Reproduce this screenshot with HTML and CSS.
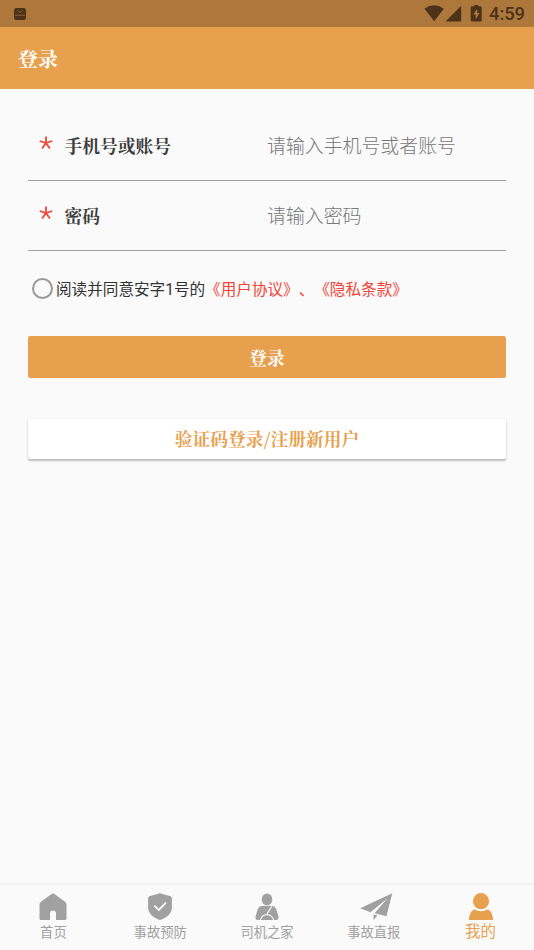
FILE: index.html
```html
<!DOCTYPE html>
<html lang="zh-CN">
<head>
<meta charset="utf-8">
<title>登录</title>
<link rel="stylesheet" href="styles.css">
</head>
<body>
<div class="status">
  <svg class="app-icon" width="12" height="12" viewBox="0 0 12 12"><rect width="12" height="12" rx="2.5" fill="#4b3218"/><path d="M3.2 2.2Q6 6 8.800 2.200M1 7.200h10" fill="none" stroke="#8e632f" stroke-width="1"/></svg>
  <svg class="indicators" width="60" height="18" viewBox="0 0 60 18"><g fill="#4b3218"><path d="M.5 3.700Q10 -3.200 19.800 3.700L10.200 16.200Z"/><path d="M37.200 .800V16.500H21.500Z"/><path d="M50.200 0h4v1.200h2.300q1.200 0 1.200 1.200V15.300q0 1.200-1.200 1.200h-8.600q-1.200 0-1.200-1.200V2.400q0-1.200 1.200-1.200h2.500Z"/></g><path d="M53.200 3.800l-4 5.800h2.400v4.700l4-6.400h-2.400Z" fill="#ae783c"/></svg>
  <span class="time">4:59</span>
</div>
<header class="header"><h1>登录</h1></header>
<main class="form">
  <div class="field">
    <svg class="star" width="14" height="14" viewBox="0 0 14 14"><path d="M7 .5V7L.7 5M7 7l6.300-2M7 7l-3.900 5.500M7 7l3.900 5.500"/></svg>
    <label>手机号或账号</label><span class="placeholder">请输入手机号或者账号</span>
  </div>
  <div class="field">
    <svg class="star" width="14" height="14" viewBox="0 0 14 14"><path d="M7 .5V7L.7 5M7 7l6.300-2M7 7l-3.900 5.500M7 7l3.900 5.500"/></svg>
    <label>密码</label><span class="placeholder">请输入密码</span>
  </div>
  <div class="agreement"><i class="radio"></i><span class="terms">阅读并同意安字1号的<span class="link">《用户协议》、《隐私条款》</span></span></div>
  <div class="button primary">登录</div>
  <div class="button secondary">验证码登录/注册新用户</div>
</main>
<nav class="tabs">
  <div class="tab"><svg width="36" height="30" viewBox="0 0 36 30"><path d="M16.200 2.200q1.800-1.300 3.600 0L30 9.700q1.500 1.200 1.500 3V26.500q0 1.500-1.500 1.500h-9v-6.500q0-3-3-3t-3 3V28H6q-1.500 0-1.500-1.500V12.700q0-1.800 1.500-3Z"/></svg><span>首页</span></div>
  <div class="tab"><svg width="36" height="30" viewBox="0 0 36 30"><path d="M18 1.300L28.500 4.300q1.400.400 1.400 2V16q0 7-10.200 11.600-1.700.800-3.400 0Q6.100 23 6.100 16V6.300q0-1.600 1.400-2Z"/><path d="M12.300 13.700l4.500 4.300 7.200-7.400" fill="none" stroke="#fafafa" stroke-width="1.800"/></svg><span>事故预防</span></div>
  <div class="tab"><svg width="36" height="30" viewBox="0 0 36 30"><ellipse cx="18" cy="7.500" rx="5.300" ry="6"/><path d="M12.500 14h11q2.500 0 4 4l2 6.500q.5 2.500-1.600 3.500h-2.600Q23.300 22 18 22T10.700 28H8.100Q6 27 6.500 24.500l2-6.500Q10 14 12.500 14Z"/><path d="M11.900 28q1.500-4.700 6.100-4.700T24.100 28Z"/><path d="M22.700 14.500l-4.700 7.500" fill="none" stroke="#fafafa" stroke-width="1.200"/></svg><span>司机之家</span></div>
  <div class="tab plane"><svg width="36" height="30" viewBox="0 0 36 30"><path d="M34.300 1.200L2.200 16.300l10.300 4L29.500 6.300 16.600 21.300l11.800 2.900ZM15.500 22.600l4 1-4 4.500Z"/></svg><span>事故直报</span></div>
  <div class="tab active"><svg width="36" height="30" viewBox="0 0 36 30"><circle cx="18" cy="9.200" r="8.100"/><path d="M11 17.300q7 3.800 14 0 4.800 2.800 5.200 10.700H5.800Q6.200 20.100 11 17.300Z"/></svg><span>我的</span></div>
</nav>
</body>
</html>
```
FILE: styles.css
```css
* { box-sizing: border-box; }
body {
  margin: 0;
  height: 950px;
  display: flex;
  flex-direction: column;
  overflow: hidden;
  background: #fafafa;
  font-family: Roboto, "Noto Sans CJK SC", sans-serif;
  text-spacing-trim: space-all;
}
svg { display: block; flex: none; }
.status {
  height: 27px;
  flex: none;
  display: flex;
  align-items: center;
  padding: 0 9px 0 14px;
  background: #ae783c;
}
.indicators { margin: 0 5px 0 auto; }
.time {
  width: 36px;
  font-size: 18.3px;
  line-height: 27px;
  font-weight: 500;
  color: #4b3218;
  white-space: nowrap;
}
.header {
  height: 62px;
  flex: none;
  padding-left: 18px;
  background: #e7a14e;
}
.header h1 {
  margin: 0;
  font: 700 20px/64px "Noto Serif CJK SC", "Noto Serif SC", "Noto Sans CJK SC", serif;
  color: #fff;
}
.form { flex: 1; padding: 22px 28px 0; }
.field {
  height: 70px;
  display: flex;
  align-items: center;
  padding-left: 11px;
  border-bottom: 1px solid #a0a0a0;
}
.star { margin: -5px 12px 0 0; fill: none; stroke: #f44336; stroke-width: 1.8; }
.field label {
  width: 202px;
  margin-left: -.5px;
  font: 700 17.75px/26px "Noto Serif CJK SC", "Noto Serif SC", "Noto Sans CJK SC", serif;
  color: #3c3c3c;
}
.placeholder {
  margin: -2px 0 0 .5px;
  font: 300 18.9px/26px "Noto Sans CJK SC Light", "Noto Sans CJK SC", sans-serif;
  color: #777;
}
.agreement {
  height: 22px;
  margin-top: 26px;
  padding-left: 4px;
  display: flex;
  align-items: center;
  white-space: nowrap;
  font-size: 15.6px;
  color: #333;
}
.radio {
  width: 21px;
  height: 21px;
  margin-right: 3px;
  border: 2px solid #999;
  border-radius: 50%;
}
.link { color: #f44336; }
.button {
  border-radius: 2px;
  text-align: center;
  font: 700 17.75px/43px "Noto Serif CJK SC", "Noto Serif SC", "Noto Sans CJK SC", serif;
}
.primary { height: 42px; margin-top: 37px; background: #e7a14e; color: #fff; }
.secondary {
  height: 40px;
  margin-top: 41px;
  line-height: 40px;
  background: #fff;
  color: #e7a14e;
  box-shadow: 0 2px 2px rgba(0, 0, 0, .24), 0 0 2px rgba(0, 0, 0, .1);
}
.tabs {
  height: 67px;
  flex: none;
  display: flex;
  border-top: 2px solid #f2f2f2;
  padding-top: 7px;
}
.tab {
  flex: 1;
  display: flex;
  flex-direction: column;
  align-items: center;
  fill: #a1a1a1;
  color: #a1a1a1;
  font-size: 13.3px;
  line-height: 22px;
}
.plane svg { margin: 0 -2px 0 2px; }
.active { fill: #e7a14e; color: #e7a14e; font-size: 15.5px; line-height: 20px; }
```
